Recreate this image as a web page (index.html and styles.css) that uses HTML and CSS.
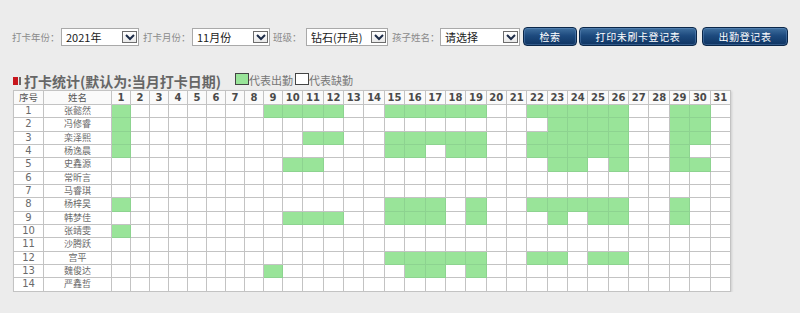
FILE: index.html
```html
<!DOCTYPE html>
<html lang="zh-CN">
<head>
    <meta charset="UTF-8">
    <meta name="viewport" content="width=device-width, initial-scale=1.0">
    <title>打卡统计</title>
    <link rel="stylesheet" href="styles.css">
</head>
<body>
    <div class="toolbar">
        <span class="lbl lbl-year">打卡年份：</span>
        <div class="select w78"><span>2021年</span><i class="arrow"><svg width="12" height="10" viewBox="0 0 12 10"><polyline points="2,3 6,7 10,3" fill="none" stroke="#1c2c48" stroke-width="2"/></svg></i></div>
        <span class="lbl lbl-month">打卡月份：</span>
        <div class="select w78"><span>11月份</span><i class="arrow"><svg width="12" height="10" viewBox="0 0 12 10"><polyline points="2,3 6,7 10,3" fill="none" stroke="#1c2c48" stroke-width="2"/></svg></i></div>
        <span class="lbl lbl-class">班级：</span>
        <div class="select w82"><span>钻石(开启)</span><i class="arrow"><svg width="12" height="10" viewBox="0 0 12 10"><polyline points="2,3 6,7 10,3" fill="none" stroke="#1c2c48" stroke-width="2"/></svg></i></div>
        <span class="lbl lbl-child">孩子姓名：</span>
        <div class="select w80"><span>请选择</span><i class="arrow"><svg width="12" height="10" viewBox="0 0 12 10"><polyline points="2,3 6,7 10,3" fill="none" stroke="#1c2c48" stroke-width="2"/></svg></i></div>
        <button type="button" class="btn btn-search">检索</button>
        <button type="button" class="btn btn-print">打印未刷卡登记表</button>
        <button type="button" class="btn btn-report">出勤登记表</button>
    </div>

    <div class="title-row">
        <span class="mark-red"></span><span class="mark-gray"></span>
        <h2 class="title">打卡统计(默认为:当月打卡日期)</h2>
        <span class="legend-box on"></span><span class="legend-text">代表出勤</span>
        <span class="legend-box off"></span><span class="legend-text">代表缺勤</span>
    </div>

    <table class="grid">
        <colgroup id="grid-cols"></colgroup>
        <thead><tr id="grid-head"></tr></thead>
        <tbody id="grid-body"></tbody>
    </table>

    <script>
        // 每个孩子本月有打卡记录的日期
        const alumnos = [
            ['张懿然', [1, 9, 10, 11, 12, 15, 16, 17, 18, 19, 22, 23, 24, 25, 26, 29, 30]],
            ['冯修睿', [1, 23, 24, 25, 26, 29, 30]],
            ['栾泽熙', [1, 11, 12, 15, 16, 17, 18, 19, 22, 23, 24, 25, 26, 29, 30]],
            ['杨逸晨', [1, 15, 16, 18, 19, 22, 23, 24, 25, 26, 29]],
            ['史鑫源', [10, 11, 23, 24, 26, 29, 30]],
            ['常昕言', []],
            ['马睿琪', []],
            ['杨梓昊', [1, 15, 16, 17, 19, 22, 23, 24, 25, 26, 29]],
            ['韩梦佳', [10, 11, 12, 15, 16, 17, 19, 23, 25, 26, 29]],
            ['张靖雯', [1]],
            ['沙腾跃', []],
            ['宫平', [15, 16, 17, 18, 19, 22, 23, 25, 26]],
            ['魏俊达', [9, 16, 17, 19]],
            ['严鑫哲', []]
        ];
        const dias = 31;

        let cols = '<col class="c-no"><col class="c-name">';
        let head = '<th class="txt">序号</th><th class="txt">姓名</th>';
        for (let d = 1; d <= dias; d++) {
            cols += d < 10 ? '<col class="c-d1">' : '<col class="c-d2">';
            head += '<th>' + d + '</th>';
        }
        document.getElementById('grid-cols').innerHTML = cols;
        document.getElementById('grid-head').innerHTML = head;

        let filas = '';
        alumnos.forEach(function (a, i) {
            filas += '<tr><td class="no">' + (i + 1) + '</td><td class="name">' + a[0] + '</td>';
            for (let d = 1; d <= dias; d++) {
                filas += a[1].indexOf(d) >= 0 ? '<td class="on"></td>' : '<td></td>';
            }
            filas += '</tr>';
        });
        document.getElementById('grid-body').innerHTML = filas;
    </script>
</body>
</html>
```

FILE: styles.css
```css
body {
    margin: 0;
    padding: 27px 0 0 12px;
    background-color: #ececec;
    font-family: "Noto Sans CJK SC", sans-serif;
    color: #333;
}
.toolbar {
    display: flex;
    align-items: center;
    height: 19px;
}
.lbl {
    flex: none;
    font-size: 9.5px;
    line-height: 18px;
    color: #8a8a8a;
    white-space: nowrap;
}
.lbl-year { width: 49px; }
.lbl-month { width: 49px; margin-left: 4px; }
.lbl-class { width: 33px; margin-left: 3px; }
.lbl-child { width: 48px; margin-left: 4px; }
.select {
    flex: none;
    display: flex;
    align-items: center;
    justify-content: space-between;
    height: 18px;
    box-sizing: border-box;
    border: 1px solid #a9a9a9;
    background-color: #fff;
    padding: 0 1px 0 4px;
}
.select span {
    font-size: 11px;
    color: #1a1a1a;
    line-height: 16px;
}
.w78 { width: 78px; }
.w82 { width: 82px; }
.w80 { width: 80px; }
.arrow {
    display: flex;
    align-items: center;
    justify-content: center;
    width: 15px;
    height: 12px;
    box-sizing: border-box;
    border: 1px solid #6d6d6d;
    background: linear-gradient(#ffffff, #e9e9e9);
}
.btn {
    flex: none;
    height: 19px;
    box-sizing: border-box;
    border: 1px solid #0b2749;
    border-radius: 4px;
    background: linear-gradient(#40709f, #1d4a7e 45%, #0f3462);
    box-shadow: inset 0 0 0 1px rgba(120, 160, 210, 0.35);
    color: #fff;
    font-family: "Noto Sans CJK SC", sans-serif;
    font-size: 10px;
    letter-spacing: 0.6px;
    padding: 0;
    cursor: pointer;
}
.btn-search { width: 54px; margin-left: 3px; }
.btn-print { width: 118px; margin-left: 2px; }
.btn-report { width: 86px; margin-left: 5px; }
.title-row {
    display: flex;
    align-items: center;
    height: 18px;
    margin: 26px 0 0 1px;
}
.mark-red {
    width: 5px;
    height: 8px;
    background-color: #c8161d;
}
.mark-gray {
    width: 2px;
    height: 8px;
    margin-left: 1px;
    background-color: #6b6b6b;
}
.title {
    width: 211px;
    margin: 0 0 0 3px;
    font-size: 14px;
    font-weight: bold;
    line-height: 18px;
    color: #666;
    white-space: nowrap;
}
.legend-box {
    width: 14px;
    height: 12px;
    box-sizing: border-box;
    border: 1px solid #444;
    margin-top: -4px;
}
.legend-box.on { background-color: #99e499; }
.legend-box.off { background-color: #fff; margin-left: 2px; }
.legend-text {
    font-size: 11px;
    line-height: 14px;
    color: #777;
    margin-top: -3px;
}
.grid {
    border-collapse: separate;
    border-spacing: 0;
    table-layout: fixed;
    width: 718px;
    margin-left: 1px;
    background-color: #fff;
    border-top: 1px solid #c3c3c3;
    border-left: 1px solid #c3c3c3;
    box-shadow: 1px 1px 2px rgba(0, 0, 0, 0.12);
}
.c-no { width: 30px; }
.c-name { width: 68px; }
.c-d1 { width: 19px; }
.c-d2 { width: 20.36px; }
.grid th, .grid td {
    padding: 0;
    border-right: 1px solid #c3c3c3;
    border-bottom: 1px solid #c3c3c3;
    text-align: center;
    white-space: nowrap;
}
.grid th {
    font-family: "DejaVu Sans", sans-serif;
    font-size: 10px;
    font-weight: bold;
    line-height: 13px;
    color: #4a4a4a;
    background-color: #fafafa;
}
.grid th.txt {
    font-family: "Noto Sans CJK SC", sans-serif;
    font-size: 9.5px;
    font-weight: normal;
    color: #555;
}
.grid td {
    font-size: 10px;
    line-height: 12.33px;
    color: #6a6a6a;
}
.grid td.name {
    font-size: 9px;
}
.grid td.no {
    font-family: "DejaVu Sans", sans-serif;
}
.grid td.on {
    background-color: #99e499;
    border-right-color: #8dd390;
    border-bottom-color: #8dd390;
}
```
